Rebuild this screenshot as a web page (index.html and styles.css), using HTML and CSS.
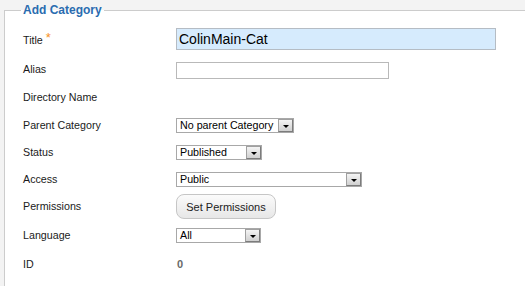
FILE: index.html
```html
<html>
  <head>
    <meta charset="UTF-8">
    <title>Add Category</title>
    <link rel="stylesheet" href="styles.css">
  </head>
  <body>
    <fieldset class="category-form">
      <legend>Add Category</legend>

      <div class="form-row form-row-title">
        <label>Title <span class="required">*</span></label>
        <input class="text-input text-input-title" type="text" value="ColinMain-Cat">
      </div>

      <div class="form-row form-row-alias">
        <label>Alias</label>
        <input class="text-input text-input-alias" type="text" value="">
      </div>

      <div class="form-row form-row-dir">
        <label>Directory Name</label>
        <span></span>
      </div>

      <div class="form-row">
        <label>Parent Category</label>
        <div class="select-box select-parent">
          <span class="select-value">No parent Category</span>
          <span class="select-arrow"><i></i></span>
        </div>
      </div>

      <div class="form-row form-row-short">
        <label>Status</label>
        <div class="select-box select-status">
          <span class="select-value">Published</span>
          <span class="select-arrow"><i></i></span>
        </div>
      </div>

      <div class="form-row form-row-short">
        <label>Access</label>
        <div class="select-box select-access">
          <span class="select-value">Public</span>
          <span class="select-arrow"><i></i></span>
        </div>
      </div>

      <div class="form-row form-row-short">
        <label>Permissions</label>
        <div><button class="perm-button" type="button">Set Permissions</button></div>
      </div>

      <div class="form-row form-row-lang">
        <label>Language</label>
        <div class="select-box select-lang">
          <span class="select-value">All</span>
          <span class="select-arrow"><i></i></span>
        </div>
      </div>

      <div class="form-row">
        <label>ID</label>
        <span class="id-value">0</span>
      </div>
    </fieldset>
  </body>
</html>
```
FILE: styles.css
```css
body {
  margin: 0;
  height: 100vh;
  display: flex;
  flex-direction: column;
  background-color: #f3f3f3;
  font-family: "Liberation Sans", Arial, sans-serif;
  font-size: 10.7px;
  color: #1a1a1a;
  overflow: hidden;
}

.category-form {
  flex: 1;
  margin: 3px -10px 0 4px;
  padding: 7px 0 0 18px;
  border: 1px solid #cccccc;
  border-bottom: none;
  background-color: white;
}

.category-form legend {
  margin-left: -2px;
  padding: 0 2px;
  font-size: 12px;
  line-height: 15px;
  font-weight: bold;
  color: #2a6cb0;
}

.form-row {
  display: grid;
  grid-template-columns: 153px auto;
  align-items: center;
  justify-items: start;
  height: 28px;
}

.form-row-title {
  height: 30px;
}

.form-row-alias {
  height: 29px;
}

.form-row-dir {
  height: 27px;
}

.form-row-short {
  height: 27px;
}

.form-row-lang {
  height: 30px;
}

.form-row label {
  line-height: 13px;
}

.required {
  color: #f7901e;
  font-size: 13px;
  position: relative;
  top: -2px;
}

.text-input {
  box-sizing: border-box;
  margin: 0;
  border: 1px solid #b9b9b9;
  font-family: "Liberation Sans", Arial, sans-serif;
  color: black;
  outline: none;
}

.text-input-title {
  width: 320px;
  height: 22px;
  padding: 0 2px 1px;
  font-size: 14px;
  background-color: #d6ebfd;
  border-color: #b5bcc4;
  margin-top: -2px;
}

.text-input-alias {
  width: 213px;
  height: 17px;
  padding: 0 3px;
  font-size: 11px;
  background-color: white;
  margin-top: 1px;
}

.select-box {
  box-sizing: border-box;
  display: flex;
  align-items: center;
  height: 15px;
  border: 1px solid #a8a8a8;
  background-color: white;
}

.select-parent { width: 118px; }
.select-status { width: 86px; }
.select-access { width: 186px; }
.select-lang { width: 85px; }

.select-value {
  flex: 1;
  padding-left: 3px;
  font-size: 10.7px;
  line-height: 13px;
  color: black;
  white-space: nowrap;
}

.select-arrow {
  box-sizing: border-box;
  display: flex;
  justify-content: center;
  align-items: flex-end;
  width: 15px;
  height: 13px;
  padding-bottom: 3px;
  border: 1px solid #7c7c7c;
  border-top-color: #a0a0a0;
  border-left-color: #a0a0a0;
  background: linear-gradient(#f4f4f4, #d0d0d0);
}

.select-arrow i {
  width: 0;
  height: 0;
  border-left: 3px solid transparent;
  border-right: 3px solid transparent;
  border-top: 3px solid black;
}

.perm-button {
  box-sizing: border-box;
  width: 100px;
  height: 25px;
  margin: 0;
  border: 1px solid #c6c6c6;
  border-radius: 8px;
  background: linear-gradient(#fbfbfb, #e7e7e7);
  font-family: "Liberation Sans", Arial, sans-serif;
  font-size: 11px;
  color: #222;
  cursor: pointer;
}

.id-value {
  margin-left: 1px;
  font-weight: bold;
  color: #6a6a6a;
  font-size: 11px;
}
```
